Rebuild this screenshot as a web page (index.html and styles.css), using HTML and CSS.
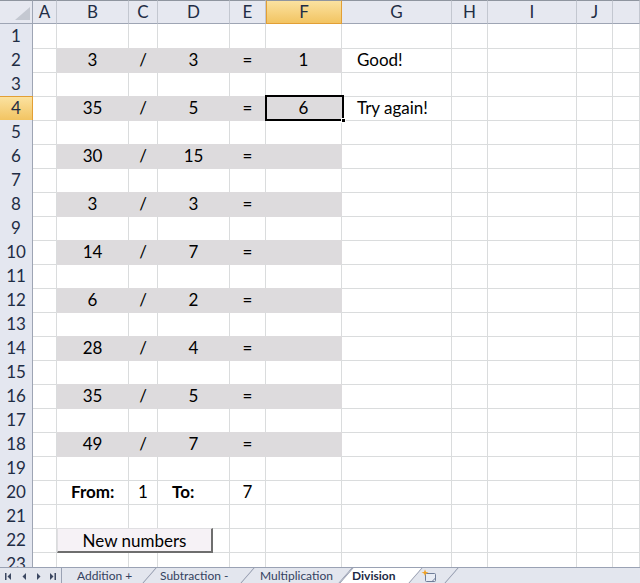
FILE: index.html
```html
<!DOCTYPE html>
<html>
<head>
<meta charset="utf-8">
<link rel="stylesheet" href="styles.css">
</head>
<body>
<div class="app">
  <div class="sheet">
    <div class="row hdr">
      <div class="corner"><svg width="32" height="22" viewBox="0 0 32 22"><polygon points="15,19 30,19 30,6" fill="#c4c8d1"/></svg></div>
      <div>A</div><div>B</div><div>C</div><div>D</div><div>E</div><div class="sel">F</div><div>G</div><div>H</div><div>I</div><div>J</div><div></div>
    </div>
    <div class="row"><div class="rh">1</div><div></div><div></div><div></div><div></div><div></div><div></div><div></div><div></div><div></div><div></div><div></div></div>
    <div class="row"><div class="rh">2</div><div></div><div class="f">3</div><div class="f">/</div><div class="f">3</div><div class="f">=</div><div class="f">1</div><div class="ind">Good!</div><div></div><div></div><div></div><div></div></div>
    <div class="row"><div class="rh">3</div><div></div><div></div><div></div><div></div><div></div><div></div><div></div><div></div><div></div><div></div><div></div></div>
    <div class="row"><div class="rh sel">4</div><div></div><div class="f">35</div><div class="f">/</div><div class="f">5</div><div class="f">=</div><div class="f">6</div><div class="ind">Try again!</div><div></div><div></div><div></div><div></div></div>
    <div class="row"><div class="rh">5</div><div></div><div></div><div></div><div></div><div></div><div></div><div></div><div></div><div></div><div></div><div></div></div>
    <div class="row"><div class="rh">6</div><div></div><div class="f">30</div><div class="f">/</div><div class="f">15</div><div class="f">=</div><div class="f"></div><div></div><div></div><div></div><div></div><div></div></div>
    <div class="row"><div class="rh">7</div><div></div><div></div><div></div><div></div><div></div><div></div><div></div><div></div><div></div><div></div><div></div></div>
    <div class="row"><div class="rh">8</div><div></div><div class="f">3</div><div class="f">/</div><div class="f">3</div><div class="f">=</div><div class="f"></div><div></div><div></div><div></div><div></div><div></div></div>
    <div class="row"><div class="rh">9</div><div></div><div></div><div></div><div></div><div></div><div></div><div></div><div></div><div></div><div></div><div></div></div>
    <div class="row"><div class="rh">10</div><div></div><div class="f">14</div><div class="f">/</div><div class="f">7</div><div class="f">=</div><div class="f"></div><div></div><div></div><div></div><div></div><div></div></div>
    <div class="row"><div class="rh">11</div><div></div><div></div><div></div><div></div><div></div><div></div><div></div><div></div><div></div><div></div><div></div></div>
    <div class="row"><div class="rh">12</div><div></div><div class="f">6</div><div class="f">/</div><div class="f">2</div><div class="f">=</div><div class="f"></div><div></div><div></div><div></div><div></div><div></div></div>
    <div class="row"><div class="rh">13</div><div></div><div></div><div></div><div></div><div></div><div></div><div></div><div></div><div></div><div></div><div></div></div>
    <div class="row"><div class="rh">14</div><div></div><div class="f">28</div><div class="f">/</div><div class="f">4</div><div class="f">=</div><div class="f"></div><div></div><div></div><div></div><div></div><div></div></div>
    <div class="row"><div class="rh">15</div><div></div><div></div><div></div><div></div><div></div><div></div><div></div><div></div><div></div><div></div><div></div></div>
    <div class="row"><div class="rh">16</div><div></div><div class="f">35</div><div class="f">/</div><div class="f">5</div><div class="f">=</div><div class="f"></div><div></div><div></div><div></div><div></div><div></div></div>
    <div class="row"><div class="rh">17</div><div></div><div></div><div></div><div></div><div></div><div></div><div></div><div></div><div></div><div></div><div></div></div>
    <div class="row"><div class="rh">18</div><div></div><div class="f">49</div><div class="f">/</div><div class="f">7</div><div class="f">=</div><div class="f"></div><div></div><div></div><div></div><div></div><div></div></div>
    <div class="row"><div class="rh">19</div><div></div><div></div><div></div><div></div><div></div><div></div><div></div><div></div><div></div><div></div><div></div></div>
    <div class="row"><div class="rh">20</div><div></div><div class="ind b">From:</div><div>1</div><div class="ind b">To:</div><div>7</div><div></div><div></div><div></div><div></div><div></div><div></div></div>
    <div class="row"><div class="rh">21</div><div></div><div></div><div></div><div></div><div></div><div></div><div></div><div></div><div></div><div></div><div></div></div>
    <div class="row"><div class="rh">22</div><div></div><div></div><div></div><div></div><div></div><div></div><div></div><div></div><div></div><div></div><div></div></div>
    <div class="row"><div class="rh">23</div><div></div><div></div><div></div><div></div><div></div><div></div><div></div><div></div><div></div><div></div><div></div></div>

    <div class="cursor"><span class="handle"></span></div>
    <button class="btn">New numbers</button>
  </div>

  <div class="tabs">
    <div class="nav">
      <svg width="61" height="16" viewBox="0 0 61 16">
        <rect x="5" y="5" width="1.5" height="7" fill="#3c4862"/>
        <polygon points="11,5 11,12 7.5,8.5" fill="#3c4862"/>
        <polygon points="26,5 26,12 22.5,8.5" fill="#3c4862"/>
        <polygon points="37,5 37,12 40.5,8.5" fill="#3c4862"/>
        <polygon points="50,5 50,12 53.5,8.5" fill="#3c4862"/>
        <rect x="54.5" y="5" width="1.5" height="7" fill="#3c4862"/>
      </svg>
    </div>
    <div class="tab t1">Addition +</div>
    <div class="tab t2">Subtraction -</div>
    <div class="tab t3">Multiplication</div>
    <div class="tab t4 active">Division</div>
    <div class="tab t5">
      <svg width="18" height="14" viewBox="0 0 18 14">
        <rect x="4.5" y="4.5" width="10" height="8" rx="1" fill="#e8ecf4" stroke="#6f7d98"/>
        <path d="M11 12.5 L14.5 9" stroke="#6f7d98" fill="none"/>
        <polygon points="4,0.5 5,3 7.5,3.5 5,4.5 4,7 3,4.5 0.5,3.5 3,3" fill="#f0a020"/>
      </svg>
    </div>
  </div>
</div>
</body>
</html>
```

FILE: styles.css
```css
* {
  box-sizing: border-box;
  margin: 0;
  padding: 0;
}

html, body {
  width: 640px;
  height: 583px;
  overflow: hidden;
  background: #ffffff;
}

body {
  font-family: Lato, "Open Sans", sans-serif;
  font-size: 17px;
  color: #000000;
}

.app {
  display: flex;
  flex-direction: column;
  height: 583px;
}

.sheet {
  position: relative;
  flex: 1;
  overflow: hidden;
}

.row {
  display: grid;
  grid-template-columns: 33px 24px 72px 29px 72px 36px 76px 110px 36px 89px 36px 27px;
  height: 24px;
  line-height: 24px;
}

.row > div {
  border-right: 1px solid #dadcdd;
  border-bottom: 1px solid #dadcdd;
  text-align: center;
  white-space: nowrap;
}

.hdr > div {
  background: #e6e8f0;
  border-top: 1px solid #8f959f;
  border-right-color: #c3c7d0;
  border-bottom-color: #9ea5b4;
  color: #1f2d45;
  line-height: 22px;
}

.hdr > .corner {
  border-right-color: #9ea5b4;
}

.corner svg {
  display: block;
}

.hdr > .sel {
  background: linear-gradient(#fbe2a0, #f2c462);
  border-left: 1px solid #e29f35;
  border-right-color: #e29f35;
  border-bottom-color: #e29f35;
}

.row > .rh {
  background: #e4e7f0;
  border-right-color: #9ea5b4;
  border-bottom-color: #c5c9d3;
  color: #1f2d45;
}

.row > .rh.sel {
  background: linear-gradient(#fbe2a0, #f2c462);
  border-top: 1px solid #e29f35;
  border-right-color: #e29f35;
  border-bottom-color: #e29f35;
  line-height: 22px;
}

.row > .f {
  background: #dddbdd;
  border-right-color: #dddbdd;
  border-bottom-color: #dddbdd;
}

.row > .ind {
  text-align: left;
  padding-left: 15px;
}

.row > .b {
  font-weight: bold;
  padding-left: 14px;
}

.cursor {
  position: absolute;
  left: 265px;
  top: 95px;
  width: 79px;
  height: 26px;
  border: 2px solid #000000;
}

.handle {
  position: absolute;
  right: -4px;
  bottom: -4px;
  width: 5px;
  height: 5px;
  background: #000000;
  border: 1px solid #ffffff;
}

.btn {
  position: absolute;
  left: 57px;
  top: 528px;
  width: 156px;
  height: 25px;
  background: #f6f2f6;
  border-style: solid;
  border-width: 1px 2px 2px 1px;
  border-color: #e0dfe2 #6e6e6e #6e6e6e #e0dfe2;
  font-family: Lato, "Open Sans", sans-serif;
  font-size: 17px;
  color: #000000;
  line-height: 21px;
}

.tabs {
  display: flex;
  height: 16px;
  background: #e3e6ee;
  border-top: 1px solid #9aa2b4;
  font-size: 12px;
  line-height: 15px;
  color: #34425f;
}

.nav {
  width: 62px;
  border-right: 1px solid #9aa2b4;
}

.nav svg {
  display: block;
}

.tab {
  position: relative;
  height: 15px;
  white-space: nowrap;
}

.tab::after {
  content: "";
  position: absolute;
  right: 0;
  top: 0;
  bottom: 0;
  border-left: 1px solid #8c94a8;
  transform: skewX(-41deg);
}

.t1 {
  width: 88px;
  padding-left: 15px;
}

.t2 {
  width: 98px;
  padding-left: 10px;
}

.t3 {
  width: 98px;
  padding-left: 12px;
}

.t4 {
  width: 70px;
  padding-left: 6px;
}

.t5 {
  width: 36px;
  padding-left: 5px;
}

.t5 svg {
  display: block;
  margin-top: 1px;
}

.active {
  font-weight: bold;
  color: #1c2a45;
  z-index: 1;
}

.active::before {
  content: "";
  position: absolute;
  left: 0;
  right: 0;
  top: 0;
  bottom: 0;
  background: #ffffff;
  z-index: -1;
  border-left: 1px solid #8c94a8;
  transform: skewX(-41deg);
}
```
